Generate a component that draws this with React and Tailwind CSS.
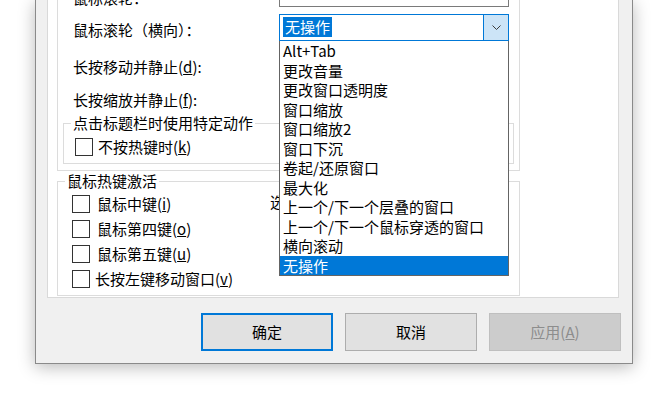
export default function App() {
  const items = [
    "Alt+Tab",
    "更改音量",
    "更改窗口透明度",
    "窗口缩放",
    "窗口缩放2",
    "窗口下沉",
    "卷起/还原窗口",
    "最大化",
    "上一个/下一个层叠的窗口",
    "上一个/下一个鼠标穿透的窗口",
    "横向滚动",
    "无操作",
  ];

  const Combo = () => (
    <div className="w-[230px] h-[27px] border border-[#7a7a7a] bg-white shrink-0" />
  );

  const Check = ({ children, gap }) => (
    <div className="flex items-center h-[25px]">
      <div className="w-[18px] h-[18px] border border-[#333333] bg-white shrink-0" />
      <span className={gap}>{children}</span>
    </div>
  );

  return (
    <div className="w-[660px] h-[394px] bg-white overflow-hidden relative text-[15px] leading-[20px] text-black font-['Noto_Sans_CJK_SC',sans-serif]">
      {/* Dialog */}
      <div className="ml-[35px] w-[598px] h-[364px] bg-[#f0f0f0] border-x border-b border-[#8a8a8a] shadow-[0_3px_16px_rgba(0,0,0,0.28)] flex flex-col">
        {/* Tab page */}
        <div className="ml-[11px] w-[572px] h-[298px] bg-white border-x border-b border-[#d9d9d9] flex flex-col shrink-0">
          {/* outer group (top cut off) */}
          <div className="ml-[9px] -mt-[30px] w-[463px] h-[201px] border border-[#dcdcdc] shrink-0 pt-[9px] flex flex-col">
            <div className="flex h-[34px] shrink-0">
              <div className="w-[221px] pl-[15px] pt-[8px]">鼠标滚轮：</div>
              <Combo />
            </div>
            <div className="flex h-[34px] shrink-0">
              <div className="w-[221px] pl-[15px] pt-[6px]">鼠标滚轮（横向）：</div>
              <div className="w-[230px] h-[27px] border border-[#0078d7] bg-white shrink-0 flex">
                <div className="flex-1 pl-[3px] pt-[2px]">
                  <span className="inline-block h-[20px] bg-[#0078d7] text-white px-[2px]">无操作</span>
                </div>
                <div className="w-[25px] h-full bg-[#cce4f7] border-l border-[#0078d7] flex items-center justify-center">
                  <svg width="9" height="5" viewBox="0 0 9 5">
                    <path d="M0.5 0.5 L4.5 4.5 L8.5 0.5" fill="none" stroke="#3c3c3c" strokeWidth="1" />
                  </svg>
                </div>
              </div>
            </div>
            <div className="flex h-[34px] shrink-0">
              <div className="w-[221px] pl-[15px] pt-[9px]">
                长按移动并静止(<u>d</u>):
              </div>
              <Combo />
            </div>
            <div className="flex h-[31px] shrink-0">
              <div className="w-[221px] pl-[15px] pt-[8px]">
                长按缩放并静止(<u>f</u>):
              </div>
              <Combo />
            </div>
            <fieldset className="ml-[5px] w-[451px] h-[51px] border border-[#dcdcdc] shrink-0">
              <legend className="ml-[7px] px-[2px]">点击标题栏时使用特定动作</legend>
              <div className="ml-[11px] mt-[4px] flex items-center h-[20px]">
                <div className="w-[18px] h-[18px] border border-[#333333] bg-white shrink-0" />
                <span className="ml-[5px]">
                  不按热键时(<u>k</u>)
                </span>
              </div>
            </fieldset>
          </div>

          {/* group 2 */}
          <fieldset className="ml-[9px] w-[463px] h-[125px] border border-[#dcdcdc] shrink-0">
            <legend className="ml-[7px] px-[2px]">鼠标热键激活</legend>
            <div className="flex">
              <div className="ml-[14px] w-[198px] flex flex-col">
                <Check gap="ml-[7px]">
                  鼠标中键(<u>i</u>)
                </Check>
                <Check gap="ml-[7px]">
                  鼠标第四键(<u>o</u>)
                </Check>
                <Check gap="ml-[7px]">
                  鼠标第五键(<u>u</u>)
                </Check>
                <Check gap="ml-[5px]">
                  长按左键移动窗口(<u>v</u>)
                </Check>
              </div>
              <div className="pt-[1px]">选项</div>
            </div>
          </fieldset>
        </div>

        {/* Buttons */}
        <div className="flex mt-[15px] ml-[165px] gap-[12px]">
          <div className="w-[132px] h-[38px] border-2 border-[#0078d7] bg-[#e1e1e1] flex items-center justify-center">
            确定
          </div>
          <div className="w-[132px] h-[38px] border border-[#adadad] bg-[#e1e1e1] flex items-center justify-center">
            取消
          </div>
          <div className="w-[132px] h-[38px] border border-[#bfbfbf] bg-[#cccccc] text-[#8d8d8d] flex items-center justify-center">
            应用(<u>A</u>)
          </div>
        </div>
      </div>

      {/* Open dropdown list */}
      <div className="absolute left-[279px] top-[41px] w-[230px] border-x border-b border-[#646464] bg-white flex flex-col">
        {items.map((t, i) => (
          <div
            key={i}
            className={
              i === items.length - 1
                ? "h-[19.5px] leading-[19.5px] pl-[3px] bg-[#0078d7] text-white whitespace-nowrap"
                : "h-[19.5px] leading-[19.5px] pl-[3px] whitespace-nowrap"
            }
          >
            {t}
          </div>
        ))}
      </div>
    </div>
  );
}
